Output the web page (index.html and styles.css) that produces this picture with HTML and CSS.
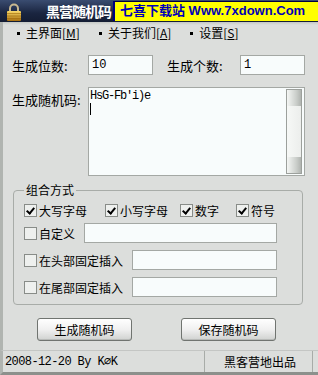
FILE: index.html
```html
<!DOCTYPE html>
<html lang="zh">
<head>
<meta charset="UTF-8">
<title>黑营随机码</title>
<link rel="stylesheet" href="styles.css">
</head>
<body>
<div class="window">
    <div class="titlebar">
        <svg class="lock" width="16" height="18" viewBox="0 0 16 18">
            <defs>
                <linearGradient id="gold" x1="0" y1="0" x2="0" y2="1">
                    <stop offset="0" stop-color="#f8d868"/>
                    <stop offset="1" stop-color="#a87010"/>
                </linearGradient>
            </defs>
            <path d="M4 9 V5.5 a4 4 0 0 1 8 0 V9" fill="none" stroke="#c8b890" stroke-width="2"/>
            <rect x="1" y="8" width="14" height="10" rx="1" fill="url(#gold)"/>
            <path d="M1 10.5 H15 M1 13 H15 M1 15.5 H15" stroke="#9a6408" stroke-width="0.8" opacity="0.7"/>
        </svg>
        <span class="title">黑营随机码</span>
        <div class="banner">七喜下载站 Www.7xdown.Com</div>
    </div>

    <div class="menubar">
        <span class="menu-item"><i></i>主界面[<u>M</u>]</span>
        <span class="menu-item m2"><i></i>关于我们[<u>A</u>]</span>
        <span class="menu-item m3"><i></i>设置[<u>S</u>]</span>
    </div>

    <div class="main">
        <div class="row">
            <span class="label">生成位数:</span>
            <div class="input small">10</div>
            <span class="label label2">生成个数:</span>
            <div class="input small">1</div>
        </div>

        <div class="row row-top">
            <span class="label pad">生成随机码:</span>
            <div class="memo">
                <div class="memo-text">HsG-Fb'i)e<br><span class="caret"></span></div>
                <div class="scrollbar">
                    <div class="sb-btn"></div>
                    <div class="sb-track"></div>
                    <div class="sb-btn"></div>
                </div>
            </div>
        </div>

        <div class="group">
            <span class="legend">组合方式</span>
            <div class="grow first">
                <span class="check w1"><b class="box on"></b>大写字母</span>
                <span class="check w2"><b class="box on"></b>小写字母</span>
                <span class="check w3"><b class="box on"></b>数字</span>
                <span class="check"><b class="box on"></b>符号</span>
            </div>
            <div class="grow g2">
                <span class="check w4"><b class="box"></b>自定义</span>
                <div class="input wide"></div>
            </div>
            <div class="grow g3">
                <span class="check w5"><b class="box"></b>在头部固定插入</span>
                <div class="input mid"></div>
            </div>
            <div class="grow g3">
                <span class="check w5"><b class="box"></b>在尾部固定插入</span>
                <div class="input mid"></div>
            </div>
        </div>

        <div class="buttons">
            <button class="btn">生成随机码</button>
            <button class="btn btn2">保存随机码</button>
        </div>
    </div>

    <div class="status">
        <span class="status-left">2008-12-20 By K&empty;K</span>
        <span class="status-right">黑客营地出品</span>
    </div>
</div>
</body>
</html>
```

FILE: styles.css
```css
*{
    margin: 0;
    padding: 0;
    box-sizing: border-box;
}
body{
    width: 318px;
    height: 375px;
    background-color: #dcdedc;
    font-family: "Noto Sans CJK SC", "DejaVu Sans", sans-serif;
    font-size: 12px;
    color: #000;
    overflow: hidden;
}
.window{
    width: 318px;
    height: 375px;
    display: flex;
    flex-direction: column;
}

/* title bar */
.titlebar{
    height: 22px;
    display: flex;
    align-items: center;
    background: linear-gradient(#3a4c70, #1a2540 60%, #141d33);
}
.lock{
    margin-left: 6px;
    margin-top: 2px;
    flex-shrink: 0;
}
.title{
    margin-left: 24px;
    color: #fff;
    font-weight: bold;
    font-size: 14px;
    letter-spacing: -1px;
    width: 67px;
    flex-shrink: 0;
    white-space: nowrap;
}
.banner{
    align-self: flex-start;
    margin-top: 1px;
    height: 20px;
    flex: 1;
    background-color: #ffff00;
    border-top: 1px solid #000040;
    border-left: 2px solid #000080;
    color: #0000b8;
    font-weight: bold;
    font-size: 13px;
    line-height: 18px;
    padding-left: 5px;
    white-space: nowrap;
    font-family: "Liberation Sans", "Noto Sans CJK SC", sans-serif;
}

/* menu */
.menubar{
    height: 22px;
    display: flex;
    align-items: center;
    border-left: 3px solid #b0b4b0;
    background: linear-gradient(#c4c8c4, #dcdedc 3px);
}
.menu-item{
    display: flex;
    align-items: center;
    margin-left: 14px;
    line-height: 14px;
}
.menu-item i{
    display: inline-block;
    width: 3px;
    height: 3px;
    background-color: #000;
    margin-right: 6px;
}
.m2{
    margin-left: 19px;
}
.m3{
    margin-left: 19px;
}

/* main */
.main{
    flex: 1;
    border-left: 3px solid #b0b4b0;
    padding-left: 9px;
    padding-top: 11px;
}
.row{
    display: flex;
    align-items: center;
    height: 20px;
}
.row-top{
    align-items: flex-start;
    height: 89px;
    margin-top: 12px;
}
.label{
    width: 76px;
    font-size: 13px;
}
.label2{
    margin-left: 14px;
    width: 73px;
}
.pad{
    padding-top: 3px;
}
.input{
    height: 20px;
    background-color: #f8fcfc;
    border: 1px solid #a4a8a4;
    padding-left: 3px;
    font-family: "Liberation Mono", monospace;
    font-size: 12px;
    line-height: 18px;
}
.small{
    width: 65px;
}
.memo{
    width: 217px;
    height: 89px;
    border: 1px solid #a4a8a4;
    background-color: #f8fcfc;
    display: flex;
    padding: 1px 2px 1px 0;
}
.memo-text{
    flex: 1;
    padding: 1px 0 0 1px;
    font-family: "Liberation Mono", monospace;
    font-size: 12px;
    line-height: 13px;
    letter-spacing: -1.2px;
}
.caret{
    display: inline-block;
    width: 1px;
    height: 12px;
    background-color: #000;
}
.scrollbar{
    width: 16px;
    display: flex;
    flex-direction: column;
    border: 1px solid #9ca09c;
}
.sb-btn{
    height: 16px;
    background: linear-gradient(90deg, #f4f6f4, #c8ccc8 70%, #b0b4b0);
}
.sb-track{
    flex: 1;
    background: linear-gradient(90deg, #f6f8f6, #eceeec);
}

/* group */
.group{
    position: relative;
    margin-top: 14px;
    margin-left: 1px;
    width: 290px;
    height: 115px;
    border: 1px solid #a8aca8;
    border-radius: 4px;
    padding-left: 10px;
    padding-top: 9px;
}
.legend{
    position: absolute;
    left: 10px;
    top: -9px;
    padding: 0 2px;
    background-color: #dcdedc;
    font-size: 12px;
    line-height: 16px;
}
.grow{
    display: flex;
    align-items: center;
    height: 20px;
}
.g2{
    margin-top: 3px;
}
.g3{
    margin-top: 7px;
}
.check{
    display: flex;
    align-items: center;
    white-space: nowrap;
}
.box{
    width: 13px;
    height: 13px;
    border: 1px solid #888c88;
    background-color: #eef0ee;
    margin-right: 2px;
    position: relative;
}
.box.on::after{
    content: "";
    position: absolute;
    left: 3px;
    top: 1px;
    width: 3px;
    height: 6px;
    border-right: 2px solid #000;
    border-bottom: 2px solid #000;
    transform: rotate(40deg);
}
.w1{
    width: 81px;
}
.w2{
    width: 75px;
}
.w3{
    width: 56px;
}
.w4{
    width: 60px;
}
.w5{
    width: 108px;
}
.wide{
    width: 193px;
}
.mid{
    width: 145px;
}

/* buttons */
.buttons{
    display: flex;
    margin-top: 13px;
    padding-left: 25px;
}
.btn{
    width: 95px;
    height: 23px;
    border: 1px solid #707470;
    border-radius: 3px;
    background: linear-gradient(#ffffff, #f0f0f0 50%, #d0d2d0);
    box-shadow: inset 0 -1px 0 #b8bab8;
    font-family: "Noto Sans CJK SC", sans-serif;
    font-size: 12px;
}
.btn2{
    margin-left: 49px;
}

/* status bar */
.status{
    height: 25px;
    display: flex;
    align-items: center;
    border-top: 1px solid #c4c6c4;
    border-bottom: 3px solid #8c908c;
    border-left: 3px solid #b0b4b0;
}
.status-left{
    width: 201px;
    padding-left: 2px;
    font-family: "Liberation Mono", monospace;
    font-size: 12px;
    letter-spacing: -0.6px;
}
.status-right{
    width: 109px;
    height: 21px;
    border-left: 1px solid #a8aca8;
    border-right: 1px solid #a8aca8;
    padding-left: 19px;
    line-height: 21px;
}
```
